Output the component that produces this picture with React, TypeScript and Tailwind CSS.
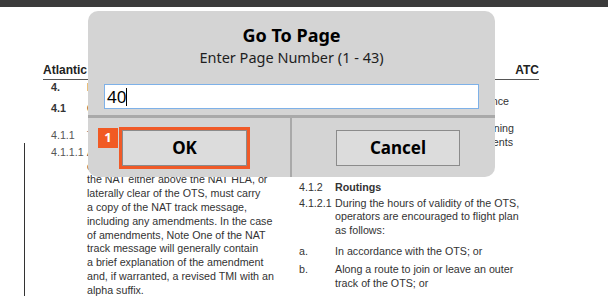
export default function App() {
    return (
        <div className="relative w-[608px] h-[296px] overflow-hidden bg-white flex flex-col font-['Liberation_Sans',Arial,sans-serif] text-[#333]">

            {/* Viewer toolbar strip */}
            <div className="h-[7px] bg-[#3b3b3b] shrink-0" />

            {/* Page header */}
            <div className="pl-[43px] pt-[56px] shrink-0">
                <div className="w-[496px] flex justify-between border-b border-[#555] pb-[1.5px] text-[12px] font-bold leading-[14px] text-[#222]">
                    <span>Atlantic Operations Manual</span>
                    <span>ATC</span>
                </div>
            </div>

            {/* Page body */}
            <div className="flex flex-1 text-[10.7px] leading-[13.8px] whitespace-nowrap">

                {/* Margin with change bar */}
                <div className="w-[43px] shrink-0 flex flex-col">
                    <div className="h-[63px]" />
                    <div className="ml-[24px] flex-1 border-l-[1.5px] border-[#333]" />
                </div>

                {/* Left column */}
                <div className="w-[256px] shrink-0 pl-[8px] flex flex-col">
                    <div className="flex mt-[1px] font-bold">
                        <div className="w-[36px] shrink-0">4.</div>
                        <div>NORTH ATLANTIC TRACKS</div>
                    </div>
                    <div className="flex mt-[8px] font-bold">
                        <div className="w-[36px] shrink-0">4.1</div>
                        <div>General</div>
                    </div>
                    <div className="flex mt-[13px] text-[#555]">
                        <div className="w-[36px] shrink-0">4.1.1</div>
                        <div>The OTS is published daily.</div>
                    </div>
                    <div className="flex mt-[3px]">
                        <div className="w-[36px] shrink-0 text-[#555]">4.1.1.1</div>
                        <div className="flex flex-col">
                            <span>Aircraft planning to operate on the OTS,</span>
                            <span>or wishing to operate within or across</span>
                            <span>the NAT either above the NAT HLA, or</span>
                            <span>laterally clear of the OTS, must carry</span>
                            <span>a copy of the NAT track message,</span>
                            <span>including any amendments. In the case</span>
                            <span>of amendments, Note One of the NAT</span>
                            <span>track message will generally contain</span>
                            <span>a brief explanation of the amendment</span>
                            <span>and, if warranted, a revised TMI with an</span>
                            <span>alpha suffix.</span>
                        </div>
                    </div>
                </div>

                {/* Right column */}
                <div className="w-[250px] shrink-0 flex flex-col">
                    <div className="flex mt-[15px]">
                        <div className="w-[36px] shrink-0" />
                        <div className="w-[174px] text-right">oceanic clearance</div>
                    </div>
                    <div className="flex mt-[14px]">
                        <div className="w-[36px] shrink-0" />
                        <div className="w-[179px] text-right">before joining</div>
                    </div>
                    <div className="flex">
                        <div className="w-[36px] shrink-0" />
                        <div className="w-[178px] text-right">requirements</div>
                    </div>
                    <div className="flex mt-[31px]">
                        <div className="w-[36px] shrink-0">4.1.2</div>
                        <div className="font-bold">Routings</div>
                    </div>
                    <div className="flex mt-[2px]">
                        <div className="w-[36px] shrink-0">4.1.2.1</div>
                        <div className="flex flex-col">
                            <span>During the hours of validity of the OTS,</span>
                            <span>operators are encouraged to flight plan</span>
                            <span>as follows:</span>
                        </div>
                    </div>
                    <div className="flex mt-[6.5px]">
                        <div className="w-[36px] shrink-0">a.</div>
                        <div>In accordance with the OTS; or</div>
                    </div>
                    <div className="flex mt-[4.5px]">
                        <div className="w-[36px] shrink-0">b.</div>
                        <div className="flex flex-col">
                            <span>Along a route to join or leave an outer</span>
                            <span>track of the OTS; or</span>
                        </div>
                    </div>
                </div>

            </div>

            {/* Go To Page dialog */}
            <div className="absolute left-[88px] top-[11px] w-[407px] h-[166px] rounded-[10px] bg-[#d4d4d4] flex flex-col font-['Noto_Sans','Open_Sans',sans-serif] text-black">

                <div className="pt-[11.5px] text-center text-[18px] font-bold leading-[24px]">Go To Page</div>
                <div className="text-center text-[14.5px] leading-[20px] text-[#1e1e1e]">Enter Page Number (1 - 43)</div>

                <div className="mt-[17.5px] mx-[16px] h-[25px] border border-[#7eb1e8] bg-white flex items-center pl-[2px] text-[17px] leading-none">
                    <span>40</span>
                    <span className="w-px h-[18px] bg-black" />
                </div>

                <div className="mt-[5.5px] h-[3px] bg-[#a9a9a9]" />

                <div className="flex flex-1">
                    <div className="relative w-[202px] pt-[12px] pl-[34px]">
                        <div className="absolute left-[10px] top-[10px] w-[20px] h-[20px] bg-[#f15a24] text-white text-[13px] font-bold flex items-center justify-center">1</div>
                        <div className="w-[125px] h-[36px] border border-[#8b8b8b] bg-[#dcdcdc] outline-3 outline-solid outline-[#f05a28] flex items-center justify-center text-[17px] font-bold">OK</div>
                    </div>
                    <div className="w-[2px] bg-[#a9a9a9]" />
                    <div className="flex-1 pt-[12px] pl-[44px]">
                        <div className="w-[124px] h-[36px] border border-[#8b8b8b] bg-[#dcdcdc] flex items-center justify-center text-[17px] font-bold">Cancel</div>
                    </div>
                </div>

            </div>

        </div>
    );
}
